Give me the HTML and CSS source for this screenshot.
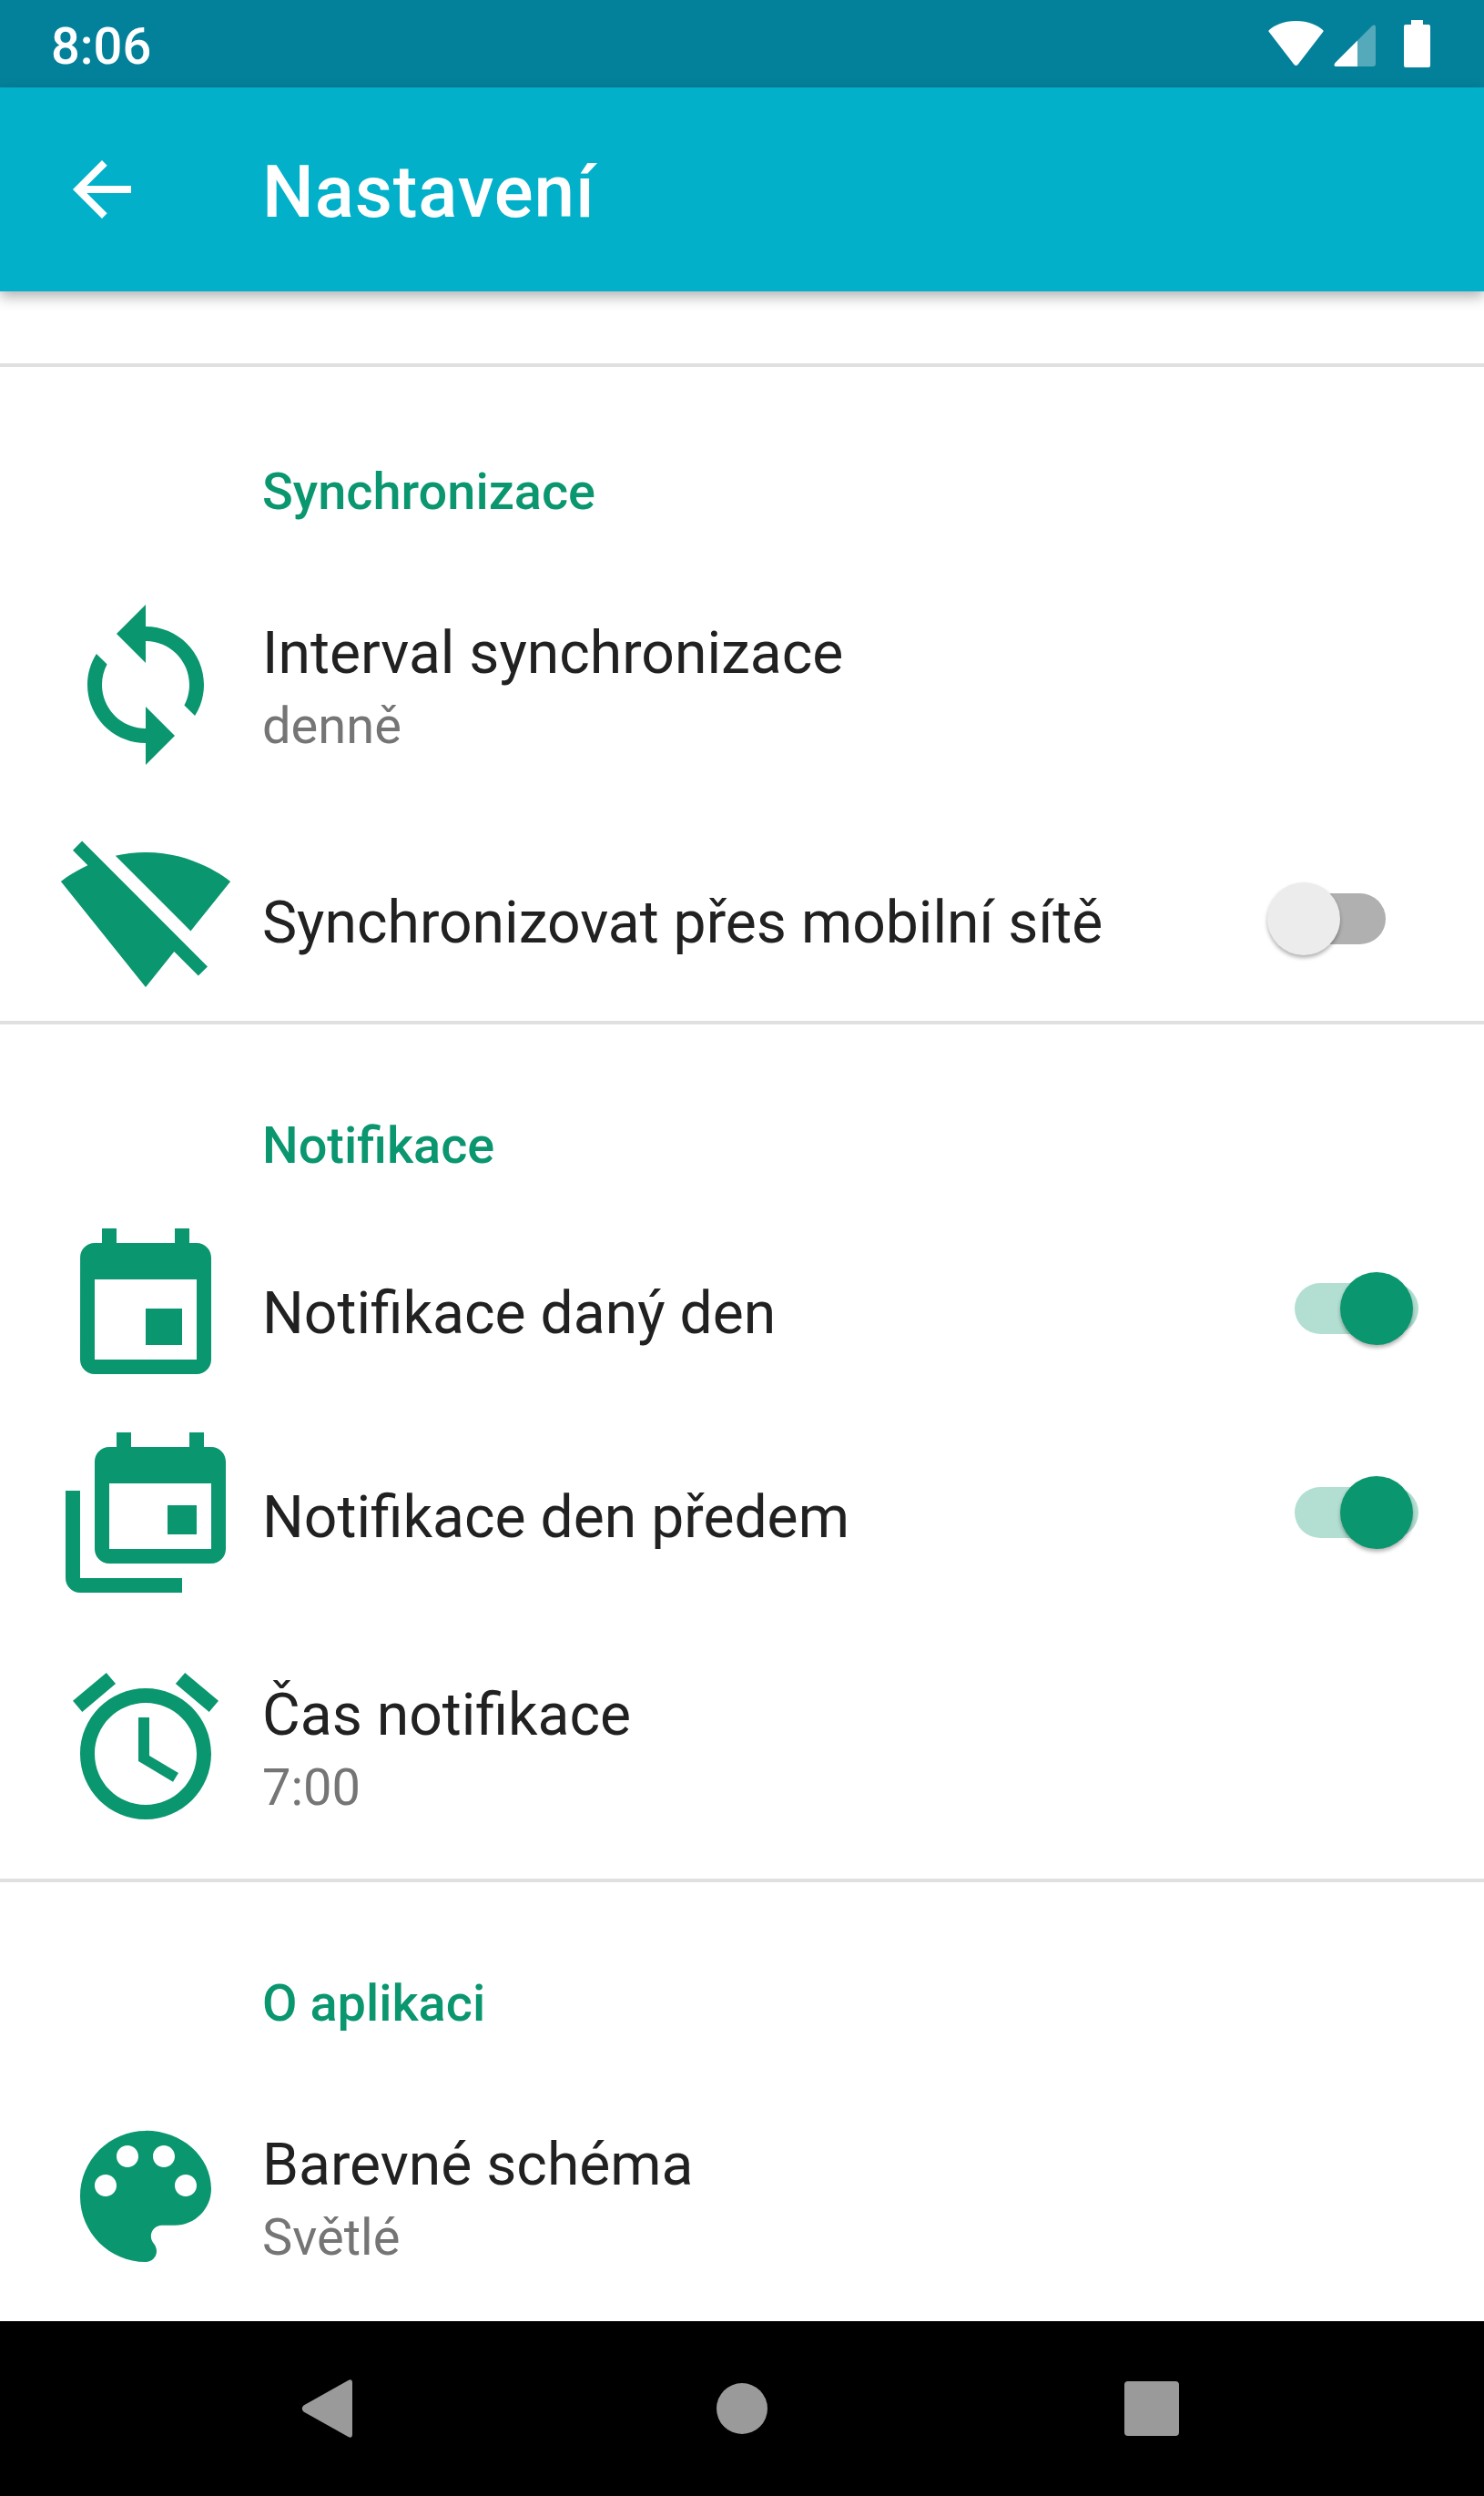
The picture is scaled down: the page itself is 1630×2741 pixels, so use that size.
FILE: index.html
```html
<!DOCTYPE html>
<html lang="cs">
<head>
    <meta charset="UTF-8">
    <title>Nastavení</title>
    <link rel="stylesheet" href="styles.css">
</head>
<body>
    <div class="status-bar">
        <span class="time">8:06</span>
        <div class="status-icons">
            <svg class="wifi" width="61" height="50" viewBox="0 0 61 50"><path fill="#fff" d="M30.5 0C17 0 7 5 1.5 9.5 0 11 0 11.500 1.200 12.500L28.500 48Q30.500 50 32.500 48L59.800 12.500C61 11.500 61 11 59.500 9.500 54 5 44 0 30.500 0Z"/></svg>
            <svg class="signal" width="46" height="46" viewBox="0 0 46 46"><path fill="#fff" d="M26 17.500V46H3Q-1 46 1.500 42Z"/><path fill="#fff" opacity=".32" d="M26 17.500L42 1.500Q46 -1 46 3V43Q46 46 43 46H26Z"/></svg>
            <svg class="battery" width="29" height="52" viewBox="0 0 29 52"><path fill="#fff" d="M8 0h13v5h6q2 0 2 2v43q0 2-2 2H2q-2 0-2-2V7q0-2 2-2h6z"/></svg>
        </div>
    </div>

    <header class="app-bar">
        <svg class="back" width="96" height="96" viewBox="0 0 24 24"><path fill="#fff" d="M20 11H7.830l5.590-5.590L12 4l-8 8 8 8 1.410-1.410L7.830 13H20v-2z"/></svg>
        <h1>Nastavení</h1>
    </header>

    <main class="settings">
        <div class="top-gap"></div>

        <section class="group first">
            <h2>Synchronizace</h2>
            <div class="row tall">
                <svg class="icon" viewBox="0 0 24 24"><path d="M12 4V1L8 5l4 4V6c3.310 0 6 2.690 6 6 0 1.010-.25 1.970-.7 2.800l1.460 1.460C19.540 15.030 20 13.570 20 12c0-4.420-3.580-8-8-8zm0 14c-3.310 0-6-2.690-6-6 0-1.010.25-1.970.7-2.800L5.240 7.740C4.460 8.970 4 10.430 4 12c0 4.420 3.580 8 8 8v3l4-4-4-4v3z"/></svg>
                <div class="texts">
                    <div class="title">Interval synchronizace</div>
                    <div class="sub">denně</div>
                </div>
            </div>
            <div class="row">
                <svg class="icon" viewBox="0 0 24 24"><path d="M23.640 7c-.45-.34-4.930-4-11.640-4-1.500 0-2.890.19-4.150.48L18.180 13.800 23.640 7zm-6.600 8.220L3.270 1.440 2 2.720l2.050 2.060C1.910 5.760.59 6.820.36 7l11.630 14.490.01.01.01-.01 3.900-4.860 3.320 3.320 1.270-1.270-3.460-3.460z"/></svg>
                <div class="texts">
                    <div class="title">Synchronizovat přes mobilní sítě</div>
                </div>
                <div class="switch off"><span class="thumb"></span></div>
            </div>
        </section>

        <section class="group">
            <h2>Notifikace</h2>
            <div class="row">
                <svg class="icon" viewBox="0 0 24 24"><path d="M17 12h-5v5h5v-5zM16 1v2H8V1H6v2H5c-1.110 0-1.990.9-1.990 2L3 19c0 1.100.89 2 2 2h14c1.100 0 2-.9 2-2V5c0-1.100-.9-2-2-2h-1V1h-2zm3 18H5V8h14v11z"/></svg>
                <div class="texts">
                    <div class="title">Notifikace daný den</div>
                </div>
                <div class="switch on"><span class="thumb"></span></div>
            </div>
            <div class="row">
                <svg class="icon" viewBox="0 0 24 24"><path d="M1 9v12c0 1.100.9 2 2 2h14v-2H3V9H1z"/><path d="M21 3h-1V1h-2v2h-8V1H8v2H7c-1.100 0-2 .9-2 2v12c0 1.100.9 2 2 2h14c1.100 0 2-.9 2-2V5c0-1.100-.9-2-2-2zm0 14H7V8h14v9z"/><path d="M19 11h-4v4h4z"/></svg>
                <div class="texts">
                    <div class="title">Notifikace den předem</div>
                </div>
                <div class="switch on"><span class="thumb"></span></div>
            </div>
            <div class="row tall alarm">
                <svg class="icon" viewBox="0 0 24 24"><path d="M22 5.720l-4.600-3.860-1.290 1.530 4.600 3.860L22 5.720zM7.880 3.390L6.600 1.860 2 5.710l1.290 1.530 4.590-3.850zM12.500 8H11v6l4.750 2.850.75-1.230-4-2.370V8zM12 4c-4.970 0-9 4.030-9 9s4.030 9 9 9c4.970 0 9-4.030 9-9s-4.030-9-9-9zm0 16c-3.870 0-7-3.130-7-7s3.130-7 7-7 7 3.130 7 7-3.130 7-7 7z"/></svg>
                <div class="texts">
                    <div class="title">Čas notifikace</div>
                    <div class="sub">7:00</div>
                </div>
            </div>
        </section>

        <section class="group last">
            <h2>O aplikaci</h2>
            <div class="row tall">
                <svg class="icon" viewBox="0 0 24 24"><path d="M12 3c-4.970 0-9 4.030-9 9s4.030 9 9 9c.83 0 1.500-.67 1.500-1.500 0-.39-.15-.74-.39-1.040-.23-.26-.38-.61-.38-.99 0-.83.67-1.500 1.500-1.500H16c2.760 0 5-2.240 5-5 0-4.420-4.030-8-9-8zm-5.500 9c-.83 0-1.500-.67-1.500-1.500S5.670 9 6.500 9 8 9.670 8 10.500 7.330 12 6.500 12zm3-4C8.670 8 8 7.330 8 6.500S8.670 5 9.500 5s1.500.67 1.500 1.500S10.330 8 9.500 8zm5 0c-.83 0-1.500-.67-1.500-1.500S13.670 5 14.500 5s1.500.67 1.500 1.500S15.330 8 14.500 8zm3 4c-.83 0-1.500-.67-1.500-1.500S16.670 9 17.500 9s1.500.67 1.500 1.500-.67 1.500-1.500 1.500z"/></svg>
                <div class="texts">
                    <div class="title">Barevné schéma</div>
                    <div class="sub">Světlé</div>
                </div>
            </div>
        </section>
    </main>

    <nav class="nav-bar">
        <svg class="nav-back" width="56" height="64" viewBox="0 0 56 64"><path fill="#9a9a9a" d="M52 .8Q56 -1 56 4V60Q56 65 52 63.200L2.500 35.500Q-1 32 2.500 28.500Z"/></svg>
        <span class="nav-home"></span>
        <span class="nav-recent"></span>
    </nav>
</body>
</html>
```

FILE: styles.css
```css
html, body {
    margin: 0;
    padding: 0;
}
body {
    height: 2741px;
    display: flex;
    flex-direction: column;
    overflow: hidden;
    background-color: #fff;
    font-family: Roboto, "Noto Sans", sans-serif;
}

.status-bar {
    height: 96px;
    flex-shrink: 0;
    display: flex;
    align-items: center;
    justify-content: space-between;
    padding: 0 59px 0 56px;
    background-color: #04819a;
    color: #fff;
}
.time {
    margin-top: 6px;
    font-size: 56px;
    font-weight: 500;
    line-height: 90px;
}
.status-icons {
    display: flex;
    align-items: center;
}
.signal {
    margin: 4px 31px 0 11px;
}

.app-bar {
    height: 224px;
    flex-shrink: 0;
    display: flex;
    align-items: center;
    padding-left: 64px;
    background-color: #02b1c9;
    box-shadow: 0 6px 14px rgba(0, 0, 0, 0.3);
    position: relative;
}
.back {
    margin-right: 128px;
}
.app-bar h1 {
    margin: 6px 0 0;
    font-size: 80px;
    font-weight: 500;
    line-height: 96px;
    letter-spacing: 0.9px;
    color: #fff;
}

.settings {
    flex: 1;
    overflow: hidden;
}
.top-gap {
    height: 79px;
}
.group {
    border-top: 4px solid #e0e0e0;
}
.group.first {
    padding-bottom: 1px;
}
.group h2 {
    height: 200px;
    box-sizing: border-box;
    margin: 0;
    padding: 101px 0 0 288px;
    font-size: 55.9px;
    font-weight: 500;
    line-height: 64px;
    color: #0a966f;
}
.group.first h2 {
    height: 205px;
    padding-top: 105px;
}
.group.last h2 {
    height: 201px;
}
.row {
    height: 224px;
    display: flex;
    align-items: center;
    padding: 0 72px 0 64px;
}
.row.tall {
    height: 288px;
}
.row.alarm {
    height: 290px;
}
.icon {
    width: 192px;
    height: 192px;
    flex-shrink: 0;
    margin-right: 32px;
    fill: #0a966f;
}
.texts {
    flex: 1;
    padding-top: 10px;
}
.tall .texts {
    padding-top: 4px;
}
.title {
    font-size: 64.2px;
    line-height: 76px;
    color: #212121;
}
.sub {
    margin-top: 10px;
    font-size: 56px;
    line-height: 64px;
    color: #757575;
}

.switch {
    height: 56px;
    border-radius: 28px;
    position: relative;
}
.switch .thumb {
    width: 80px;
    height: 80px;
    border-radius: 50%;
    position: absolute;
    top: -12px;
    box-shadow: 0 3px 4px rgba(0, 0, 0, 0.3);
}
.switch.off {
    width: 120px;
    margin: 2px 36px 0 0;
    background-color: #b0b0b0;
}
.switch.off .thumb {
    left: -10px;
    background-color: #ececec;
}
.switch.on {
    width: 136px;
    background-color: #b2dfd2;
}
.switch.on .thumb {
    right: 6px;
    background-color: #0a966f;
}

.nav-bar {
    height: 192px;
    flex-shrink: 0;
    display: flex;
    align-items: center;
    padding-left: 331px;
    background-color: #000;
}
.nav-home {
    width: 56px;
    height: 56px;
    margin-left: 400px;
    border-radius: 50%;
    background-color: #9a9a9a;
}
.nav-recent {
    width: 60px;
    height: 60px;
    margin-left: 392px;
    border-radius: 4px;
    background-color: #9a9a9a;
}
```
